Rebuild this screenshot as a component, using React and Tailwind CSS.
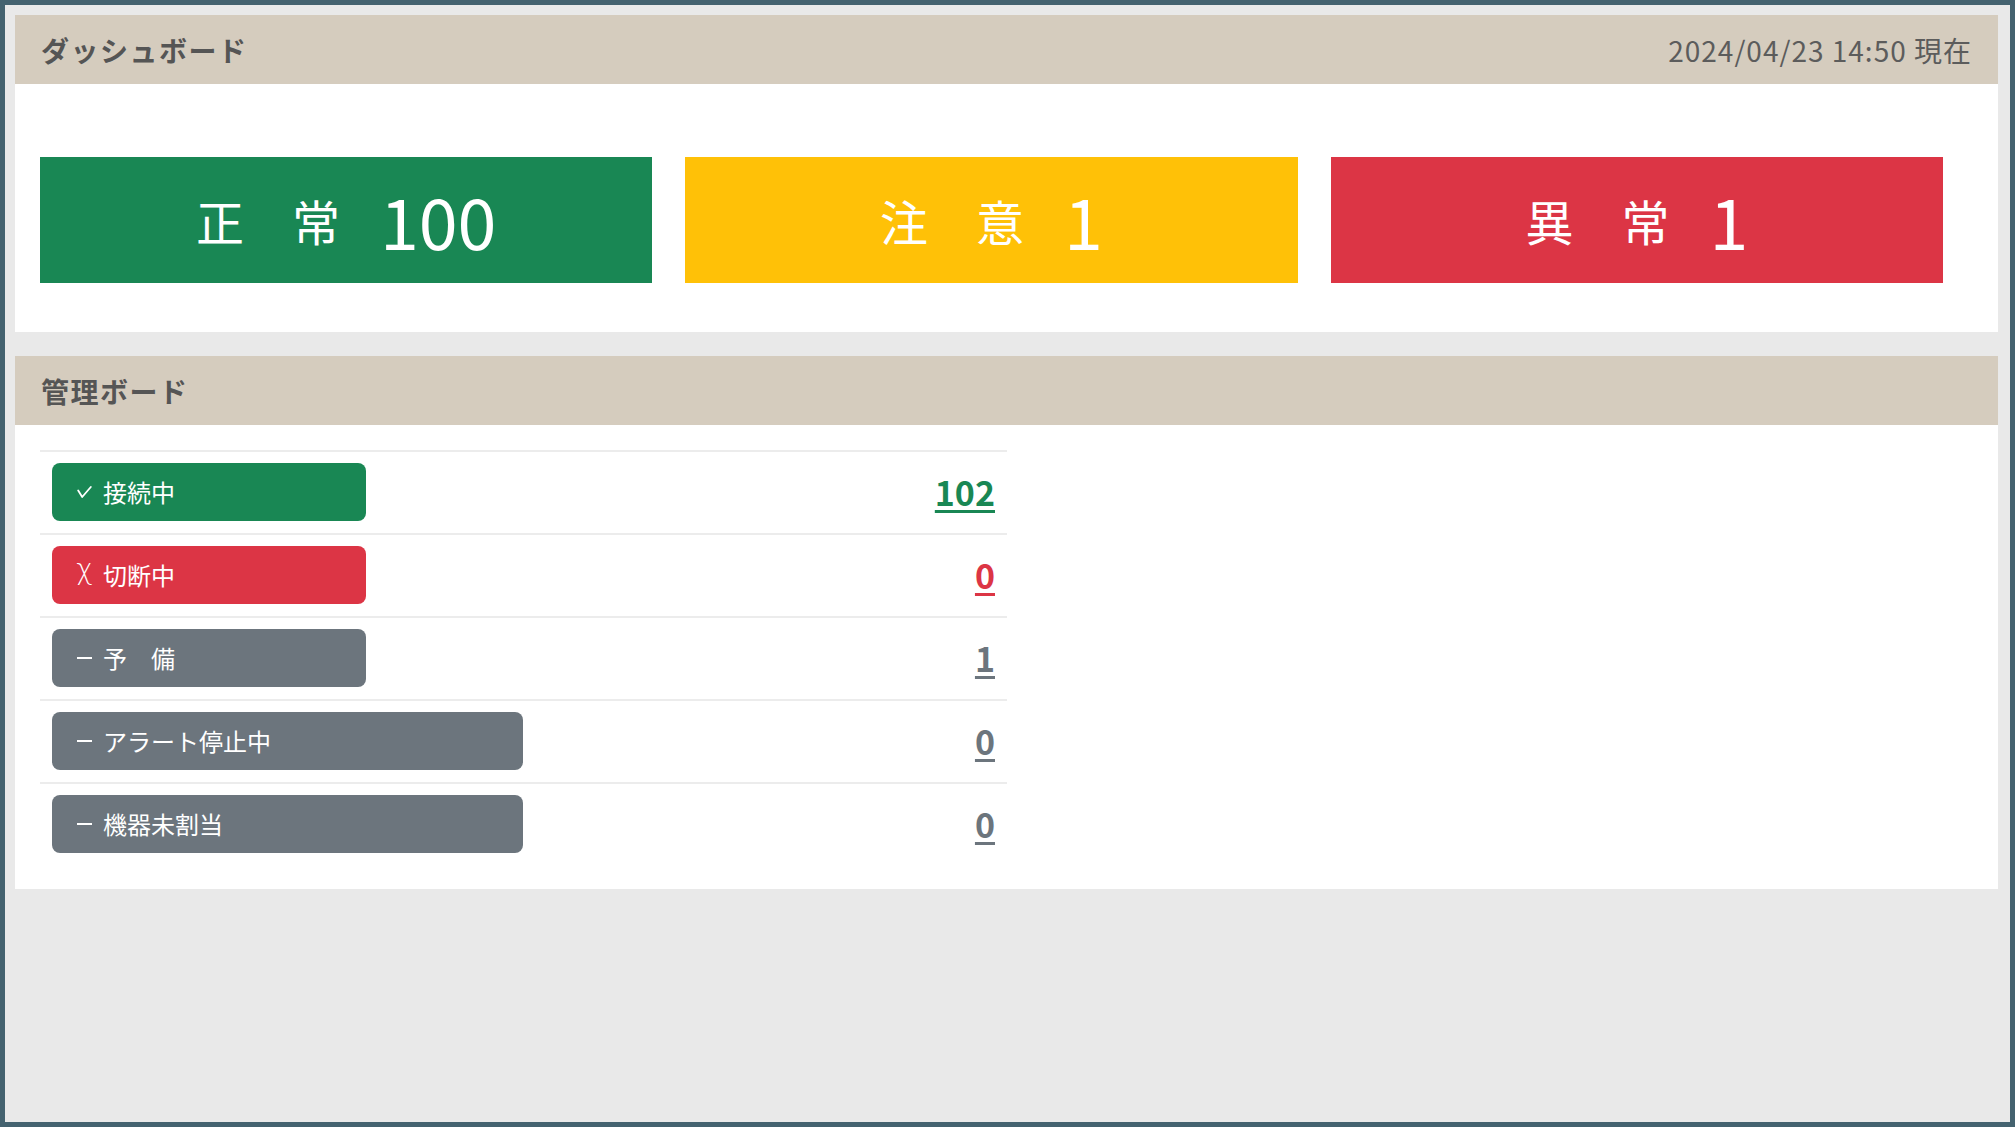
const cards = [
  { label: "正\u3000常", value: "100", bg: "bg-[#198754]" },
  { label: "注\u3000意", value: "1", bg: "bg-[#ffc107]" },
  { label: "異\u3000常", value: "1", bg: "bg-[#dc3545]" },
];

const rows = [
  { icon: "check", label: "接続中", value: "102", badge: "bg-[#198754] w-[314px]", num: "text-[#198754]" },
  { icon: "chi", label: "切断中", value: "0", badge: "bg-[#dc3545] w-[314px]", num: "text-[#dc3545]" },
  { icon: "dash", label: "予\u3000備", value: "1", badge: "bg-[#6c757d] w-[314px]", num: "text-[#6c757d]" },
  { icon: "dash", label: "アラート停止中", value: "0", badge: "bg-[#6c757d] w-[471px]", num: "text-[#6c757d]" },
  { icon: "dash", label: "機器未割当", value: "0", badge: "bg-[#6c757d] w-[471px]", num: "text-[#6c757d]" },
];

const BadgeIcon = ({ type }) => {
  if (type === "check") {
    return (
      <svg width="15" height="12" viewBox="0 0 15 12" fill="none" stroke="white" strokeWidth="1.8" strokeLinecap="round" strokeLinejoin="round">
        <path d="M1.2 4.5L5.2 11L13.8 1" />
      </svg>
    );
  }
  if (type === "chi") {
    return <span className="relative -top-[5px] text-[28px] leading-none font-['DejaVu_Sans',sans-serif] font-light">χ</span>;
  }
  return <span className="block w-[15px] h-[2px] bg-white" />;
};

const PanelHeader = ({ title, right }) => (
  <div className="h-[69px] bg-[#d5ccbe] flex items-center justify-between px-[26px]">
    <h2 className="text-[28px] font-bold text-[#555555] leading-none tracking-[1.5px]">{title}</h2>
    {right && <span className="text-[28px] text-[#5c5c5c] leading-none tracking-[1px]">{right}</span>}
  </div>
);

export default function App() {
  return (
    <div className="w-full h-[1127px] border-[5px] border-[#44626f] bg-[#e9e9e9] pt-[10px] pl-[10px] pr-[12px] font-['Noto_Sans_CJK_JP',sans-serif]">
      {/* ダッシュボード */}
      <section>
        <PanelHeader title="ダッシュボード" right="2024/04/23 14:50 現在" />
        <div className="bg-white pt-[73px] pb-[49px] pl-[25px] pr-[55px] flex gap-[33px]">
          {cards.map((c, i) => (
            <div key={i} className={`flex-1 h-[126px] ${c.bg} flex items-center justify-center text-white`}>
              <span className="text-[48px] leading-none">{c.label}</span>
              <span className="ml-[40px] text-[70px] leading-none">{c.value}</span>
            </div>
          ))}
        </div>
      </section>

      {/* 管理ボード */}
      <section className="mt-[24px]">
        <PanelHeader title="管理ボード" />
        <div className="bg-white pt-[25px] pb-[24px] pl-[25px]">
          <div className="w-[967px]">
            {rows.map((r, i) => (
              <div key={i} className="border-t-2 border-[#ececec] flex items-center justify-between px-[12px] pt-[11px] pb-[12px]">
                <div className={`${r.badge} h-[58px] rounded-[8px] flex items-center px-[25px] text-white`}>
                  <span className="w-[15px] flex items-center justify-center">
                    <BadgeIcon type={r.icon} />
                  </span>
                  <span className="ml-[11px] text-[24px] leading-none">{r.label}</span>
                </div>
                <a href="#" className={`${r.num} text-[34px] font-bold leading-none underline decoration-[3px] underline-offset-[4px]`}>
                  {r.value}
                </a>
              </div>
            ))}
          </div>
        </div>
      </section>
    </div>
  );
}
